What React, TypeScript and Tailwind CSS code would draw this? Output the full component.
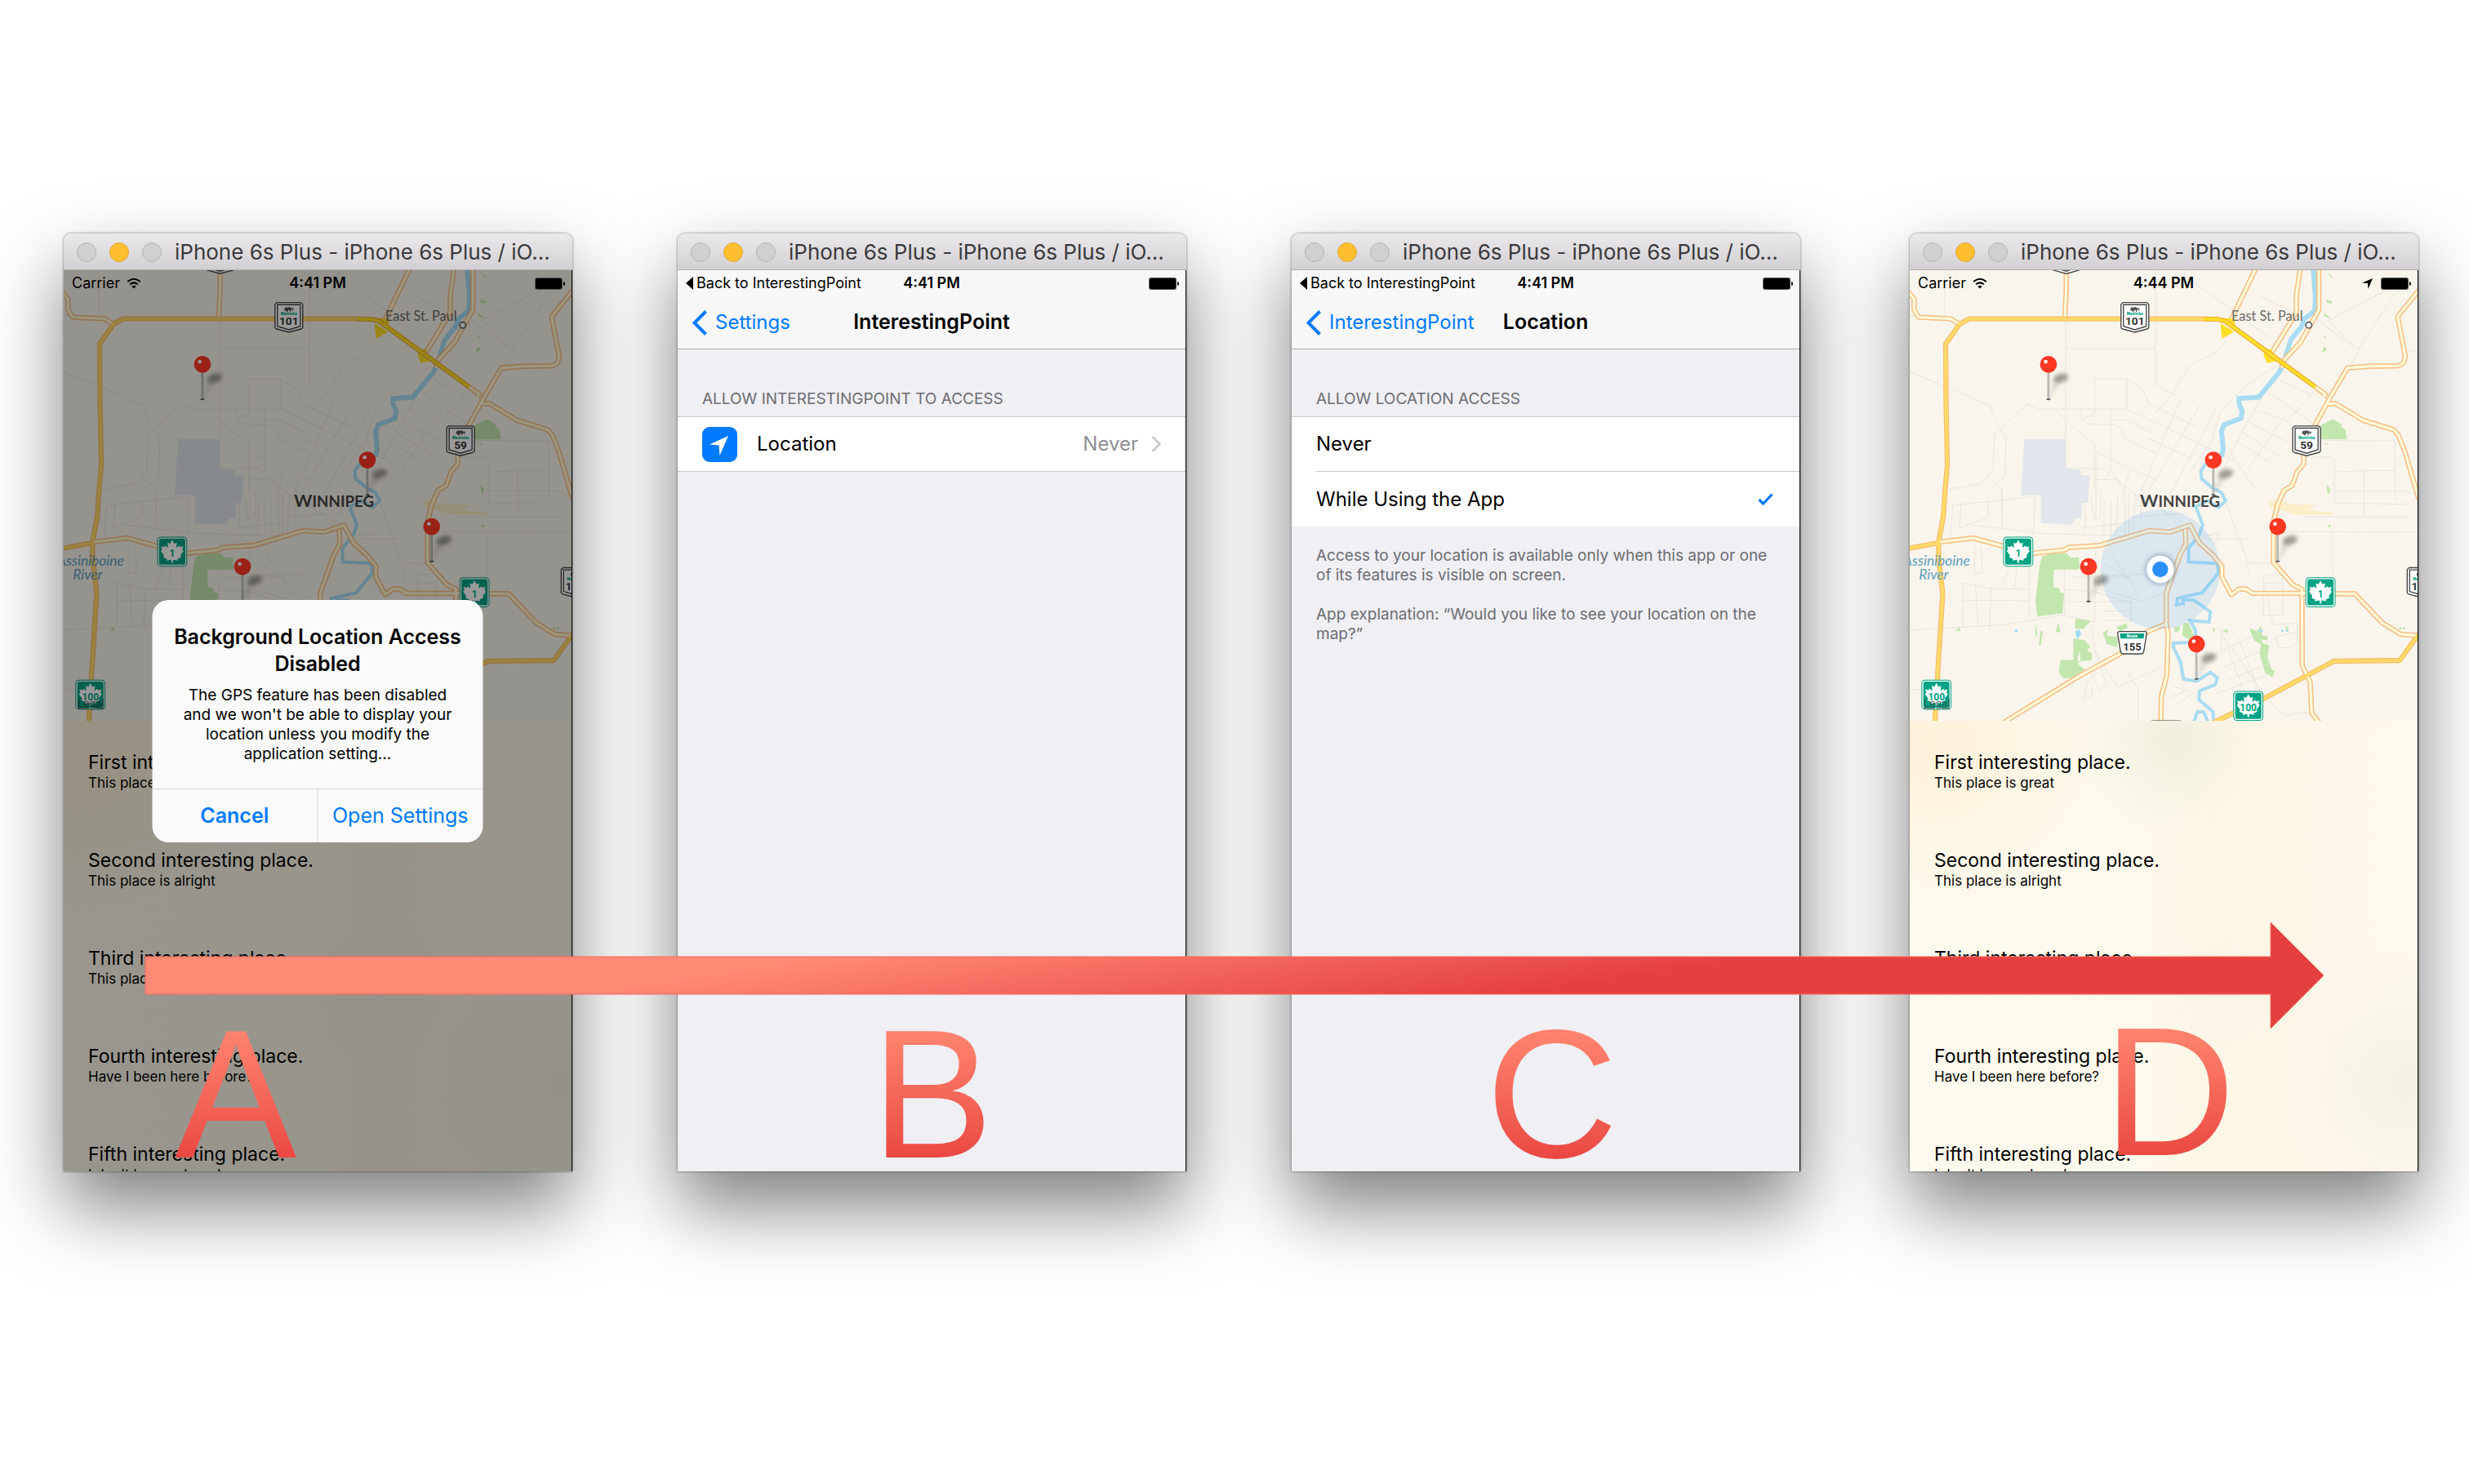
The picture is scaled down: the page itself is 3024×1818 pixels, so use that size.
import React from "react";

const PIN_POSITIONS = [
  [566, 380],
  [1171, 731],
  [1407, 975],
  [713, 1122],
  [1109, 1406],
];

const PLACES = [
  { title: "First interesting place.", note: "This place is great" },
  { title: "Second interesting place.", note: "This place is alright" },
  { title: "Third interesting place.", note: "This place is okay" },
  { title: "Fourth interesting place.", note: "Have I been here before?" },
  { title: "Fifth interesting place.", note: "I don't know where I am" },
];

const MAJOR_ROADS = [
  "M149,1700 L158,1540 L178,1220 L163,1090 L163,1030 L180,940 L187,840 L195,750 L190,500 L189,305 L240,232 L275,213 L1140,213",
  "M40,1057 L163,1035",
  "M1170,1695 L1360,1604 L1613,1469 L1855,1466 L1925,1368",
];

const ROADS = [
  "M50,112 L73,140 L73,180 L90,207 L205,212 L240,232",
  "M631,20 L631,110 L626,205",
  "M1328,25 L1232,225",
  "M1490,25 L1475,130 L1475,190 L1385,337",
  "M1558,25 L1558,180 L1490,300 L1425,370 L1423,393",
  "M1925,108 L1847,205 L1875,350 L1868,375 L1850,385 L1740,387 L1663,393 L1600,500 L1540,610 L1503,715 L1503,745 L1478,775 L1460,825 L1430,842 L1407,895 L1392,955 L1391,1106 L1462,1188 L1496,1205 L1497,1485 L1526,1545 L1532,1660 L1560,1695",
  "M1545,463 L1582,490 L1574,500",
  "M1590,525 L1618,523 L1720,585 L1833,620 L1850,640 L1875,705 L1925,875",
  "M163,1032 L290,1017 L455,1062 L510,1073 L625,1061 L640,1052 L755,1044 L935,990 L1012,995 L1085,970 L1120,1035 L1170,1080 L1202,1120 L1202,1160 L1237,1225 L1265,1204 L1290,1204 L1315,1220 L1500,1220 L1690,1222 L1740,1275 L1790,1328 L1858,1370 L1925,1376",
  "M1068,985 L1070,1040 L1048,1080 L998,1220 L998,1330 L1005,1370 L1000,1520 L980,1600 L978,1700",
  "M395,1698 L680,1523 L750,1485 L860,1425 L930,1360 L998,1332",
];

const MINOR_ROADS =
  "M185,33 V207 M57,202 H90 M629,205 V762 H775 M629,322 H959 V33 M959,322 V455 L1040,500 M57,407 L352,531 L378,605 L411,645 L405,792 L374,822 L343,793 L362,768 L368,638 L489,525 L530,544 H855 L1250,735 M591,544 L630,588 L735,672 V840 M737,560 V433 H854 V542 M854,433 L910,468 L934,525 L1110,610 M686,544 V574 L706,598 L815,602 L840,622 L842,652 L960,705 M694,580 L737,560 M795,544 V768 M740,700 L960,805 M795,582 L850,584 L942,630 M930,650 L1090,725 M1050,510 L890,880 M1120,530 L930,850 M1180,545 L1000,880 M200,838 L318,818 L343,793 M374,822 L395,842 V930 M740,803 H815 L838,835 V880 M770,803 L795,768 L830,815 L900,870 M866,768 L846,830 V1020 M215,897 L517,865 L510,1010 M215,897 L205,1020 M245,890 L240,980 L345,940 V880 M285,970 L545,1000 L850,1010 M395,840 V980 M690,980 L870,960 M700,880 V990 M720,860 L735,950 L758,940 V850 M740,720 V950 M640,905 L650,890 L683,908 L650,915 M770,880 V1010 M795,880 V1010 M820,860 L815,1000 M860,850 V1010 M885,850 L878,990 M905,900 V960 M900,830 L960,900 L1060,960 M875,900 L1090,890 M870,940 L1080,925 M930,860 L1070,1000 M295,1045 V1148 L325,1142 L318,1050 M253,1180 V1340 M298,1185 L308,1342 M355,1200 L350,1350 M240,1180 L355,1203 L495,1205 M250,1245 L495,1247 M420,1135 L395,1200 M450,1130 L442,1200 M495,1010 V1310 M57,1355 L410,1335 L618,1299 L735,1325 L740,1030 M625,1135 V1300 M625,1250 H870 M650,1160 H870 M620,1205 L740,1215 L880,1260 M765,1285 H870 M765,1320 H870 V1250 M740,1155 L930,1150 L1080,1020 M755,1205 L910,1250 L1005,1210 M775,1110 L880,1180 M800,1080 L900,1230 M725,1340 L735,1430 L780,1560 L755,1575 L725,1530 L748,1510 M735,1430 L820,1565 L1000,1480 M695,1605 L708,1550 L748,1490 M695,1605 L725,1600 V1560 M870,1500 L860,1520 L895,1570 V1690 M57,1573 H110 M1065,33 V55 L1385,287 M1240,225 L1215,295 L1175,340 L1083,385 L1025,480 L960,560 M1345,130 L1460,185 M1550,215 L1690,320 H1705 V325 L1645,440 M1690,315 L1590,220 L1820,100 M1705,322 L1830,130 L1900,60 M1885,330 H1920 M1415,380 L1330,430 L1245,500 L1195,560 L1165,660 L1080,780 M1415,440 L1530,490 M1370,480 L1570,620 M1350,500 L1280,620 L1210,760 M1440,590 L1540,480 M1320,545 L1440,585 L1480,640 M1295,590 L1475,680 M1270,625 L1420,720 M1250,660 L1380,740 M1230,700 L1320,830 M1480,720 H1600 L1615,730 V890 L1890,893 M1440,560 L1300,760 M1615,775 L1723,770 V940 M1838,660 V880 M1520,658 L1838,661 M1723,770 H1838 M1615,845 H1870 L1920,860 M1500,940 H1895 M1380,993 L1920,994 M1609,994 V1150 M1090,1020 L1310,1020 M1145,1090 L1195,1000 L1130,1010 M1210,870 L1300,1110 H1400 M1290,1110 L1310,1170 M1355,1155 V1310 M1355,1155 L1425,1145 V1180 L1355,1185 M1425,1180 V1300 H1350 M1360,1200 L1390,1335 L1480,1330 V1400 L1455,1420 H1410 L1400,1380 L1480,1360 M1200,1350 V1450 M1200,1355 L1290,1600 M1225,1400 L1360,1600 L1435,1670 L1480,1660 H1530 M1200,1430 L1310,1380 M1210,1490 L1350,1430 M1220,1540 L1370,1480 M1180,1590 L1390,1510 M1260,1380 L1340,1580 M1040,1430 L1060,1585 L1010,1600 M1020,1560 L1100,1585 L1020,1640";

function CanadaShield({ x, y, label }: { x: number; y: number; label: string }) {
  return (
    <g transform={`translate(${x} ${y})`}>
      <rect x="-55" y="-55" width="110" height="110" rx="14" fill="#00a383" />
      <rect x="-50" y="-50" width="100" height="100" rx="10" fill="none" stroke="#fff" strokeWidth="4" />
      <path
        d="M0,-43 8,-29 17,-33 15,-14 25,-22 28,-17 41,-19 37,-8 42,-2 30,14 33,21 19,27 21,33 4,30 2,42 -2,42 -4,30 -21,33 -19,27 -33,21 -30,14 -42,-2 -37,-8 -41,-19 -28,-17 -25,-22 -15,-14 -17,-33 -8,-29Z"
        fill="#fff"
      />
      <text y="20" textAnchor="middle" fontFamily="Roboto, sans-serif" fontWeight="700" fontSize="36" fill="#00a383">
        {label}
      </text>
    </g>
  );
}

function ManitobaShield({ x, y, label }: { x: number; y: number; label?: string }) {
  return (
    <g transform={`translate(${x} ${y})`}>
      <path d="M-44,-54 H44 L51,-47 V37 Q50,41 45,43 L0,55 L-45,43 Q-50,41 -51,37 V-47Z" fill="#fff" stroke="#444" strokeWidth="4" />
      <path d="M-42,-46 H42 V33 L0,46 L-42,33Z" fill="#fff" stroke="#444" strokeWidth="4" />
      {label && (
        <>
          <path
            d="M-17,-30 Q-14,-40 -4,-36 Q2,-40 8,-34 L17,-33 L16,-24 H13 V-29 L8,-27 L7,-20 H4 L3,-27 L-3,-25 L-4,-19 H-8 L-9,-23 Q-16,-22 -17,-30Z"
            fill="#555"
          />
          <text y="-7" textAnchor="middle" fontFamily="Inter, sans-serif" fontWeight="800" fontSize="13" fill="#00a383">
            Manitoba
          </text>
          <text y="29" textAnchor="middle" fontFamily="Roboto, sans-serif" fontWeight="700" fontSize="41" fill="#333">
            {label}
          </text>
        </>
      )}
    </g>
  );
}

function Pin({ x, y, id }: { x: number; y: number; id: string }) {
  return (
    <g transform={`translate(${x} ${y})`}>
      <path d="M2,122 L18,60 L48,58 L10,120Z" fill="#000" opacity="0.1" filter={`url(#${id}-soft)`} />
      <ellipse cx="45" cy="50" rx="28" ry="16" fill="#000" opacity="0.36" transform="rotate(-14 45 50)" filter={`url(#${id}-soft)`} />
      <rect x="-4" y="28" width="8" height="100" fill="#a9a9a9" />
      <rect x="-1" y="28" width="3" height="100" fill="#c8c8c8" />
      <ellipse cx="0" cy="128" rx="8" ry="3" fill="#555" />
      <circle r="31" fill="#ff3824" />
      <circle cx="-10" cy="-10" r="7" fill="#fff" />
    </g>
  );
}

function CityMap({ id, located }: { id: string; located: boolean }) {
  return (
    <svg viewBox="57 33 1863 1656" preserveAspectRatio="xMidYMid slice" className="block h-[552px] w-full" role="img" aria-label="Map of Winnipeg">
      <defs>
        <filter id={`${id}-soft`} x="-60%" y="-60%" width="220%" height="220%">
          <feGaussianBlur stdDeviation="8" />
        </filter>
      </defs>
      <rect x="0" y="0" width="2000" height="1800" fill="#f9f5ed" />
      <path d="M477,654 H630 V762 L685,768 V787 H718 L711,888 H690 L686,948 L668,943 L652,968 L538,962 V860 H465Z" fill="#e1e7ec" />
      <g fill="#c3e6ae">
        <path d="M543,1085 L570,1075 L630,1072 L650,1090 L678,1087 L680,1133 H585 V1198 L605,1200 L610,1218 L623,1220 L618,1293 L525,1305 L518,1250 L535,1110Z" />
        <path d="M1555,608 L1608,581 L1642,600 L1640,608 L1655,620 L1661,655 H1560Z" />
        <path d="M657,1385 L700,1393 L718,1415 L708,1430 L725,1440 V1465 L680,1470 L672,1478 L695,1495 L702,1505 L660,1530 L620,1533 L604,1510 L610,1465 L657,1463Z M680,1430 L672,1465 L685,1475Z" />
        <path d="M666,1312 L722,1320 L695,1350 H662Z M765,1365 L785,1352 L780,1375 L820,1380 L818,1418 L780,1405Z M815,1345 L850,1330 L857,1345 L830,1360Z" />
        <path d="M517,1325 L525,1365 L518,1385Z M537,1357 L545,1360 L538,1413 L531,1410Z M604,1325 L609,1365 L592,1360Z M225,1357 L238,1345 L245,1359Z" />
        <path d="M1303,1347 L1330,1360 L1345,1338 L1350,1375 L1370,1378 L1368,1392 L1345,1390 L1355,1405 L1375,1410 L1370,1460 L1385,1500 L1395,1505 L1388,1530 L1360,1510 L1340,1440 L1345,1405 L1320,1393Z" />
        <path d="M1060,1330 L1080,1328 L1105,1390 L1090,1395 L1057,1375Z M1027,1345 L1050,1340 L1045,1360 L1030,1362Z M1168,1345 L1177,1350 L1170,1368Z M1205,1360 L1222,1350 L1225,1365Z" />
        <path d="M1582,35 L1605,55 L1608,66Z M1585,140 L1608,150 L1605,157 L1588,155Z M1573,188 L1604,212 L1580,205Z M1577,313 L1588,328 L1568,336Z M1588,820 L1600,840 L1593,860 L1587,840Z M1587,974 L1601,966 V980Z M1573,666 L1595,672 L1588,676Z M1573,275 L1585,280 L1580,285Z" />
        <path d="M1853,1344 h8 v9 h-8Z M1866,1344 h8 v9 h-8Z M1435,1338 L1448,1348 L1438,1355Z" />
      </g>
      <path d="M1375,885 L1400,875 L1460,895 L1545,895 L1520,915 L1615,925 L1610,932 L1480,932 L1380,905Z" fill="#fbeec8" />
      <g fill="#a6dcf5">
        <path d="M663,1360 L680,1352 L686,1370 L672,1388Z M442,1353 h12 v8 h-12Z M1340,1353 h12 v8 h-12Z M1420,1353 h8 v8 h-8Z M1437,1353 h9 v8 h-9Z" />
      </g>
      <path d={MINOR_ROADS} fill="none" stroke="#e6e2dc" strokeWidth="2.5" />
      <g fill="none" stroke="#a9dcf2" strokeLinejoin="miter">
        <path strokeWidth="18" d="M1537,25 L1545,130 L1543,183 L1505,213 L1495,240 L1455,290 L1425,385 L1412,410 L1338,500 L1265,505 L1266,530 L1277,550 L1272,578 L1210,602 L1201,625 L1207,690 L1201,718" />
        <path strokeWidth="12" d="M1201,716 L1145,742 L1125,770 L1128,800 L1170,835 L1200,850 L1216,880 L1190,905 L1150,880 L1107,903 L1132,970 L1120,1005 L1080,1055 L1080,1105 L1185,1110 L1190,1145 L1130,1218 L1040,1238 L1035,1262 L1060,1258 L1060,1243 L1100,1245 L1160,1288 L1155,1325 L1085,1320 L1105,1355 L1107,1400 L1025,1402 L1025,1420 L1050,1470 L1062,1535 L1110,1542 L1160,1510 L1185,1530 L1178,1555 L1120,1578 L1118,1610 L1170,1655 L1172,1700" />
        <path strokeWidth="12" d="M1097,1700 L1112,1655 L1135,1655 L1155,1700" />
      </g>
      <g fill="none" strokeLinejoin="round">
        {ROADS.map((d) => (
          <path key={d} d={d} stroke="#f8bd80" strokeWidth="19" />
        ))}
        {MAJOR_ROADS.map((d) => (
          <path key={d} d={d} stroke="#f8bd72" strokeWidth="19" />
        ))}
        {ROADS.map((d) => (
          <path key={d} d={d} stroke="#fff9d8" strokeWidth="10" />
        ))}
        {MAJOR_ROADS.map((d) => (
          <path key={d} d={d} stroke="#ffd966" strokeWidth="12" />
        ))}
        <path d="M1203,285 L1197,230 L1240,255 L1245,262Z M1367,375 L1355,345 L1360,325 L1385,325 L1402,368Z M1230,210 H1195 L1250,245 V215Z" fill="#ffdf24" />
        <path d="M1135,213 L1192,215 L1215,222 L1545,463" stroke="#f0a83c" strokeWidth="18" />
        <path d="M1135,213 L1192,215 L1215,222 L1545,463" stroke="#ffdf24" strokeWidth="11" />
      </g>

      {located && <circle cx="976" cy="1132" r="219" fill="#3b93f5" fillOpacity="0.14" />}

      <g fontFamily="Lato, sans-serif">
        <text x="1237" y="220" fontSize="49" fill="#6b6b6b">
          East St. Paul
        </text>
        <g fontStyle="italic" fontSize="52" fill="#5f9fbd">
          <text x="278" y="1120" textAnchor="end">
            Assiniboine
          </text>
          <text x="145" y="1170" textAnchor="middle">
            River
          </text>
        </g>
        <text x="902" y="904" fontSize="64" fontWeight="700" fill="#444">
          W<tspan fontSize="56">INNIPEG</tspan>
        </text>
      </g>
      <circle cx="1521" cy="236" r="11" fill="#fff" stroke="#5c5c5c" strokeWidth="5" />

      <ManitobaShield x={883} y={207} label="101" />
      <ManitobaShield x={1513} y={660} label="59" />
      <ManitobaShield x={1933} y={1180} label="101" />
      <ManitobaShield x={631} y={-8} />
      <CanadaShield x={455} y={1067} label="1" />
      <CanadaShield x={1564} y={1216} label="1" />
      <CanadaShield x={155} y={1592} label="100" />
      <CanadaShield x={1299} y={1633} label="100" />
      <g transform="translate(873 1401)">
        <path d="M-47,-41 H47 Q55,-40 53,-32 L43,30 Q41,41 32,41 H-32 Q-41,41 -43,30 L-53,-32 Q-55,-40 -47,-41Z" fill="#fff" stroke="#444" strokeWidth="4" />
        <path d="M-45,-34 H45 L42,-15 H-42Z" fill="#00a383" />
        <text y="-19" textAnchor="middle" fontFamily="Inter, sans-serif" fontWeight="800" fontSize="14" fill="#fff">
          Route
        </text>
        <text y="28" textAnchor="middle" fontFamily="Roboto, sans-serif" fontWeight="700" fontSize="39" fill="#333">
          155
        </text>
      </g>
      <path d="M935,1690 Q940,1686 950,1686 H1045 Q1055,1686 1060,1690Z" fill="#333" />
      <text x="108" y="1637" fontFamily="Inter, sans-serif" fontSize="38" fill="#3c3c3c" fillOpacity="0.8" textDecoration="underline">
        Legal
      </text>

      {located && (
        <g>
          <circle cx="976" cy="1132" r="58" fill="#5b7a96" fillOpacity="0.4" filter={`url(#${id}-soft)`} />
          <circle cx="976" cy="1132" r="50" fill="#fff" />
          <circle cx="976" cy="1132" r="29" fill="#2a8fff" />
        </g>
      )}
      {PIN_POSITIONS.map(([x, y]) => (
        <Pin key={x} x={x} y={y} id={id} />
      ))}
    </svg>
  );
}

function StatusBar({ time, back, locating }: { time: string; back?: boolean; locating?: boolean }) {
  return (
    <div className="grid h-8 grid-cols-[1fr_auto_1fr] items-center text-[18px] leading-8 text-black">
      {back ? (
        <button type="button" className="flex items-center gap-1 whitespace-nowrap pl-[10px] text-left">
          <svg viewBox="0 0 9 16" className="h-4 w-[9px]" aria-hidden="true">
            <path d="M9 0V16L0 8Z" />
          </svg>
          Back to InterestingPoint
        </button>
      ) : (
        <div className="flex items-center gap-2 pl-[10px]">
          <span>Carrier</span>
          <svg viewBox="0 0 18 13" className="h-[14px] w-[18px]" role="img" aria-label="Wi-Fi">
            <path d="M9 13L6.4 10.2Q9 8.2 11.6 10.2Z" />
            <path d="M4.2 7.8Q9 3.9 13.8 7.8M1.2 4.5Q9 -2 16.8 4.5" fill="none" stroke="#000" strokeWidth="2.1" />
          </svg>
        </div>
      )}
      <span className="font-semibold">{time}</span>
      <div className="flex items-center justify-end gap-[10px] pr-[8px]">
        {locating && (
          <svg viewBox="0 0 13 13" className="size-[13px]" role="img" aria-label="Location in use">
            <path d="M13 0L7.5 13L7 6L0 5.5Z" />
          </svg>
        )}
        <svg viewBox="0 0 37 15" className="h-[15px] w-[37px]" role="img" aria-label="Battery full">
          <rect x="0" y="0" width="34" height="15" rx="3" fill="#555" />
          <rect x="1" y="1" width="32" height="13" rx="2" />
          <path d="M35 5Q37 5 37 7.5Q37 10 35 10Z" />
        </svg>
      </div>
    </div>
  );
}

function NavBar({ back, title }: { back: string; title: string }) {
  return (
    <header className="border-b border-[#adadb0] bg-[#f7f7f8]">
      <StatusBar time="4:41 PM" back />
      <div className="relative flex h-16 items-center justify-center text-[25px]">
        <button type="button" className="absolute left-[18px] flex items-center gap-[10px] text-[24px] text-[#007aff]">
          <svg viewBox="0 0 18 31" className="h-[31px] w-[18px]" aria-hidden="true">
            <path d="M16.5 1.5L2.5 15.5L16.5 29.5" fill="none" stroke="currentColor" strokeWidth="4" />
          </svg>
          {back}
        </button>
        <h2 className="font-semibold">{title}</h2>
      </div>
    </header>
  );
}

function PlaceList() {
  return (
    <ul className="bg-[#fef9ed] bg-[radial-gradient(circle_at_4%_4%,#fdf1d9_0,transparent_26%),radial-gradient(circle_at_52%_4%,#f0f0de_0,transparent_18%),radial-gradient(circle_at_62%_56%,#f7f3e6_0,transparent_18%),radial-gradient(circle_at_98%_74%,#f3f1e5_0,transparent_22%),linear-gradient(90deg,#fefaee_0,#fdf9ec_45%,#fef6e6_60%,#fef9ec_100%)]">
      {PLACES.map((place) => (
        <li key={place.title} className="flex h-[120px] flex-col justify-center px-[30px] pt-0.5">
          <p className="text-[23px] leading-[30px]">{place.title}</p>
          <p className="text-[17px] leading-5">{place.note}</p>
        </li>
      ))}
    </ul>
  );
}

function MapScreen({ id, time, located }: { id: string; time: string; located: boolean }) {
  return (
    <>
      <CityMap id={id} located={located} />
      <PlaceList />
      {!located && <div className="absolute inset-0 bg-black/40" />}
      <div className="absolute inset-x-0 top-0">
        <StatusBar time={time} locating={located} />
      </div>
    </>
  );
}

function SimulatorWindow({
  letter,
  letterClass,
  className = "",
  children,
}: {
  letter: string;
  letterClass: string;
  className?: string;
  children: React.ReactNode;
}) {
  return (
    <section
      aria-label={`Step ${letter}`}
      className={`relative min-w-0 flex-1 rounded-t-[9px] shadow-[0_44px_90px_rgba(0,0,0,0.5),0_0_3px_rgba(0,0,0,0.55)] ${className}`}
    >
      <div className="flex h-[45px] items-center rounded-t-[9px] border-b border-[#b3b1b4] bg-linear-to-b from-[#ebe9eb] to-[#d2d0d3] pl-4 pt-0.5">
        <div className="flex shrink-0 gap-4">
          <button type="button" aria-label="Close" className="size-6 rounded-full border border-[#b5b4b7] bg-[#d0cfd2]" />
          <button type="button" aria-label="Minimize" className="size-6 rounded-full border border-[#e2a73a] bg-[#ffbf2f]" />
          <button type="button" aria-label="Zoom" className="size-6 rounded-full border border-[#b5b4b7] bg-[#d0cfd2]" />
        </div>
        <h1 className="ml-4 whitespace-nowrap text-[26px] leading-8 text-[#3b3a3c]">iPhone 6s Plus - iPhone 6s Plus / iO...</h1>
      </div>
      <div className="relative h-[1104px] overflow-hidden border-r border-black bg-[#efeff4]">{children}</div>
      <span
        className={`absolute bg-linear-to-b from-[#ff8470] from-15% to-[#e8433f] to-90% bg-clip-text font-['Liberation_Sans',sans-serif] text-[224px] leading-[224px] text-transparent ${letterClass}`}
      >
        {letter}
      </span>
    </section>
  );
}

function DisabledAlert() {
  return (
    <div
      role="alertdialog"
      aria-labelledby="alert-title"
      aria-describedby="alert-text"
      className="absolute left-1/2 top-[404px] w-[405px] -translate-x-1/2 overflow-hidden rounded-[20px] bg-[#f9faf9] text-center"
    >
      <div className="px-5 pb-[30px] pt-[29px]">
        <h2 id="alert-title" className="text-[25px] font-semibold leading-[33px]">
          Background Location Access
          <br />
          Disabled
        </h2>
        <p id="alert-text" className="mt-[10px] text-[19px] leading-6">
          The GPS feature has been disabled
          <br />
          and we won't be able to display your
          <br />
          location unless you modify the
          <br />
          application setting...
        </p>
      </div>
      <div className="grid h-[66px] grid-cols-2 border-t border-[#d3d4d6] text-[25px] text-[#007aff]">
        <button type="button" className="border-r border-[#d3d4d6] font-semibold">
          Cancel
        </button>
        <button type="button">Open Settings</button>
      </div>
    </div>
  );
}

export default function App() {
  return (
    <main className="relative flex min-h-screen items-start gap-[129px] overflow-hidden bg-white pb-[383px] pl-[78px] pr-[62px] pt-[286px] font-['Inter',sans-serif] text-black">
      <SimulatorWindow letter="A" letterClass="left-[136px] top-[942px]">
        <MapScreen id="map-a" time="4:41 PM" located={false} />
        <DisabledAlert />
      </SimulatorWindow>

      <SimulatorWindow letter="B" letterClass="left-[237px] top-[942px]">
        <NavBar back="Settings" title="InterestingPoint" />
        <h3 className="px-[30px] pb-[6px] pt-[46px] text-[19px] leading-[30px] text-[#6d6d72]">ALLOW INTERESTINGPOINT TO ACCESS</h3>
        <button type="button" className="flex h-[68px] w-full items-center border-y border-[#c8c7cc] bg-white px-[30px] text-[24px]">
          <svg viewBox="0 0 43 43" className="size-[43px]" aria-hidden="true">
            <rect width="43" height="43" rx="9" fill="#007aff" />
            <path d="M32 11L21.5 35L20.5 22.5L9 21.5Z" fill="#fff" />
          </svg>
          <span className="ml-6">Location</span>
          <span className="ml-auto text-[#8e8e93]">Never</span>
          <svg viewBox="0 0 12 20" className="ml-4 h-5 w-3" aria-hidden="true">
            <path d="M1.5 1L10.5 10L1.5 19" fill="none" stroke="#c7c7cc" strokeWidth="2.5" />
          </svg>
        </button>
      </SimulatorWindow>

      <SimulatorWindow letter="C" letterClass="left-[238px] top-[942px]">
        <NavBar back="InterestingPoint" title="Location" />
        <fieldset>
          <legend className="px-[30px] pb-[6px] pt-[46px] text-[19px] leading-[30px] text-[#6d6d72]">ALLOW LOCATION ACCESS</legend>
          <div className="border-t border-[#c8c7cc] bg-white pl-[30px] text-[24px]">
            <label className="flex h-[67px] items-center border-b border-[#c8c7cc]">
              <input type="radio" name="access" className="sr-only" />
              Never
            </label>
            <label className="flex h-[67px] items-center justify-between pr-8">
              <input type="radio" name="access" defaultChecked className="sr-only" />
              While Using the App
              <svg viewBox="0 0 19 15" className="h-[15px] w-[19px]" aria-hidden="true">
                <path d="M1.5 8L6.5 13L17.5 1.5" fill="none" stroke="#007aff" strokeWidth="3.2" />
              </svg>
            </label>
          </div>
        </fieldset>
        <div className="space-y-6 px-[30px] pt-6 text-[19px] leading-6 text-[#6d6d72]">
          <p>
            Access to your location is available only when this app or one
            <br />
            of its features is visible on screen.
          </p>
          <p>
            App explanation: “Would you like to see your location on the
            <br />
            map?”
          </p>
        </div>
      </SimulatorWindow>

      <SimulatorWindow letter="D" letterClass="left-[237px] top-[939px]" className="ml-[5px]">
        <MapScreen id="map-d" time="4:44 PM" located />
      </SimulatorWindow>

      <svg
        viewBox="0 0 2670 132"
        preserveAspectRatio="none"
        className="absolute inset-x-[177px] top-[1129px] h-[132px] w-[calc(100%-354px)]"
        role="img"
        aria-label="Arrow from step A to step D"
      >
        <defs>
          <linearGradient id="arrow-fill" gradientUnits="userSpaceOnUse" x1="830" y1="43" x2="857" y2="217">
            <stop offset="0" stopColor="#ff8a75" />
            <stop offset="1" stopColor="#e5403f" />
          </linearGradient>
        </defs>
        <path d="M1 43H2604V1L2669 66L2604 131V89H1Z" fill="url(#arrow-fill)" stroke="#f4685d" strokeWidth="1" />
      </svg>
    </main>
  );
}
